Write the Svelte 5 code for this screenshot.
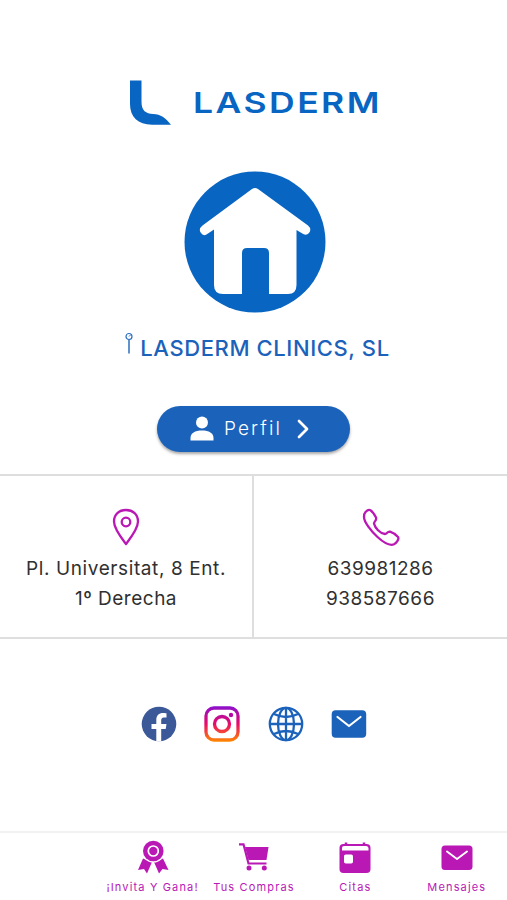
<script>
  const phones = ['639981286', '938587666'];

  const tabs = [
    { id: 'invite', label: '¡Invita Y Gana!' },
    { id: 'shop', label: 'Tus Compras' },
    { id: 'dates', label: 'Citas' },
    { id: 'messages', label: 'Mensajes' }
  ];
</script>

<div class="screen">
  <header class="brand">
    <svg class="mark" viewBox="0 0 42 46" width="42" height="46">
      <path d="M0 0.500H11.500V22C11.500 31 16 33.500 23 34C31 34.500 35 37.500 41 44.700H22C8 44.700 0 37 0 24Z" fill="#0865c2" />
    </svg>
    <span class="wordmark">LASDERM</span>
  </header>

  <svg class="house" viewBox="0 0 142 142" width="142" height="142">
    <circle cx="71" cy="71" r="70.500" fill="#0865c2" />
    <path
      d="M68 18Q71 16 74 18L124 54.500Q128 58 125 62Q122 65.500 117.500 62L112.500 59V114Q112.500 123 104 123H85V82Q85 77 80 77H63Q58 77 58 82V123H39Q30 123 30 114V58.500L24 62.500Q19.500 66 17 62Q14 58 18.500 54.500Z"
      fill="#fff"
    />
  </svg>

  <h1>
    <svg viewBox="0 0 10 24" width="10" height="24" fill="none" stroke="#2b6fbd">
      <circle cx="5" cy="4.500" r="3" stroke-width="1.200" />
      <path d="M5 4.500L7 2.500" stroke-width="1" />
      <path d="M5 8V21.500" stroke-width="1.500" />
    </svg>
    <span>LASDERM CLINICS, SL</span>
  </h1>

  <button class="profile">
    <svg viewBox="0 0 24 26" width="24" height="26" fill="#fff">
      <circle cx="12" cy="6.500" r="6" />
      <path d="M0.500 24.500V22C0.500 17 5 14.500 12 14.500S23.500 17 23.500 22V24.500Z" />
    </svg>
    <span>Perfil</span>
    <svg viewBox="0 0 12 20" width="12" height="20" fill="none" stroke="#fff" stroke-width="2.700" stroke-linecap="round" stroke-linejoin="round">
      <path d="M2 2L10 10L2 18" />
    </svg>
  </button>

  <section class="contact">
    <div class="cell">
      <svg viewBox="0 0 28 38" width="28" height="38" fill="none" stroke="#b918b5" stroke-width="2.300">
        <path d="M14 36C11 32 2 21 2 13.500C2 6.500 7 2 14 2S26 6.500 26 13.500C26 21 17 32 14 36Z" stroke-linejoin="round" />
        <circle cx="14" cy="14" r="4.300" />
      </svg>
      <p class="address">Pl. Universitat, 8 Ent.</p>
      <p>1º Derecha</p>
    </div>
    <div class="cell">
      <svg viewBox="0 0 38 38" width="38" height="38" fill="none" stroke="#b918b5" stroke-width="2.300" stroke-linejoin="round">
        <path d="M3.500 4C5 2.500 7 1.500 8.500 2.200C10.500 3.500 13 7.500 14 9.500C15 12.500 12 13.500 12 15.500C13 20 18 25.500 23 26C25 26 25 23.500 28 23.700C30.500 24.500 34 27 36 29C37.500 31 34.500 35 32 36.300C28 38 21 34 15.500 29C9 23 2 14 2 9C2 7 2.500 5 3.500 4Z" />
      </svg>
      {#each phones as phone}
        <p>{phone}</p>
      {/each}
    </div>
  </section>

  <nav class="social">
    <svg viewBox="0 0 36 36" width="36" height="36">
      <circle cx="18" cy="18" r="17.300" fill="#3b5998" />
      <path d="M15.300 35.300V23H10.500V18H15.300V14C15.300 9.500 18 7 22 7C24 7 25.500 7.300 25.500 7.300V11.500H23C20.700 11.500 20.200 13 20.200 14.500V18H25.500L24.700 23H20.200V35.300Z" fill="#fff" />
    </svg>
    <svg viewBox="0 0 36 36" width="36" height="36" fill="none">
      <defs>
        <linearGradient id="insta" x1="0" y1="0" x2="0" y2="36" gradientUnits="userSpaceOnUse">
          <stop offset="0" stop-color="#8a10d0" />
          <stop offset="0.500" stop-color="#e80b68" />
          <stop offset="1" stop-color="#ff8a00" />
        </linearGradient>
      </defs>
      <rect x="2" y="2" width="32" height="32" rx="8" stroke="url(#insta)" stroke-width="3.300" />
      <circle cx="18" cy="18" r="7.500" stroke="url(#insta)" stroke-width="3.300" />
      <circle cx="27" cy="9" r="2.200" fill="#b20aa5" />
    </svg>
    <svg viewBox="0 0 36 36" width="36" height="36" fill="none" stroke="#1b62bb" stroke-width="2.300">
      <circle cx="18" cy="18" r="16.200" />
      <ellipse cx="18" cy="18" rx="8" ry="16.200" />
      <path d="M18 2V34M2 18H34M6 8Q18 14 30 8M6 28Q18 22 30 28" />
    </svg>
    <svg viewBox="0 0 36 36" width="36" height="36">
      <rect x="0.700" y="4.200" width="34.500" height="27.500" rx="4" fill="#1b62bb" />
      <path d="M6.500 11L18 20L29.500 11" fill="none" stroke="#fff" stroke-width="2.200" stroke-linecap="round" stroke-linejoin="round" />
    </svg>
  </nav>

  <footer class="tabs">
    {#each tabs as tab (tab.id)}
      <a href="#{tab.id}" class="tab">
        <svg viewBox="0 0 34 34" width="34" height="34" fill="#b918b5">
          {#if tab.id === 'invite'}
            <path d="M7 18.500L2 30L8 29L11 33.500L16 22ZM27 18.500L32.500 30L26.500 29L23 33.500L18 22Z" />
            <circle cx="17.300" cy="11" r="11.500" fill="#fff" />
            <circle cx="17.300" cy="11" r="10.300" />
            <circle cx="17.300" cy="11" r="5" fill="none" stroke="#fff" stroke-width="1.700" />
          {:else if tab.id === 'shop'}
            <path d="M2 4.300H6.500L11.500 23.500H29.500" fill="none" stroke="#b918b5" stroke-width="2.200" />
            <path d="M8 7H31.500L29.500 20H11.500Z" />
            <circle cx="12" cy="28" r="2.500" />
            <circle cx="27.300" cy="28" r="2.500" />
          {:else if tab.id === 'dates'}
            <rect x="1.500" y="4" width="31" height="29" rx="4" />
            <path d="M8 4V2.500M26 4V2.500" stroke="#b918b5" stroke-width="2.500" />
            <path d="M4 8Q4 6 6 6H28Q30 6 30.500 8V10.500H4Z" fill="#fff" />
            <rect x="6" y="14.500" width="9" height="9" rx="1.800" fill="#fff" />
          {:else}
            <rect x="1.500" y="5.500" width="31" height="24.500" rx="3.500" />
            <path d="M7 11.500L17 19L27 11.500" fill="none" stroke="#fff" stroke-width="1.900" stroke-linecap="round" stroke-linejoin="round" />
          {/if}
        </svg>
        <span>{tab.label}</span>
      </a>
    {/each}
  </footer>
</div>

<style>
  :global(body) {
    margin: 0;
    background: #fff;
  }

  .screen {
    display: flex;
    flex-direction: column;
    align-items: center;
    box-sizing: border-box;
    height: 900px;
    padding-top: 80px;
    font-family: Inter, 'Open Sans', sans-serif;
    color: #303030;
    background: #fff;
    overflow: hidden;
  }

  .brand {
    display: flex;
    align-items: center;
    align-self: flex-start;
    height: 46px;
    margin-left: 130px;
  }

  .wordmark {
    margin-left: 20.500px;
    font-size: 29px;
    font-weight: 600;
    letter-spacing: 2px;
    line-height: 46px;
    color: #0865c2;
    transform: scaleX(1.225);
    transform-origin: left;
  }

  .house {
    flex: none;
    margin: 45px 0 0 2px;
  }

  h1 {
    display: flex;
    align-items: center;
    gap: 6px;
    height: 30px;
    margin: 19.500px 0 0 7px;
    font-size: 22px;
    font-weight: 500;
    letter-spacing: 0.6px;
    line-height: 30px;
    white-space: nowrap;
    color: #1b62bb;
  }

  h1 svg {
    margin-top: -8px;
  }

  .profile {
    display: flex;
    align-items: center;
    box-sizing: border-box;
    width: 193px;
    height: 46px;
    flex: none;
    margin-top: 43px;
    padding: 0 0 0 33px;
    border: none;
    border-radius: 23px;
    background: #1b62bb;
    box-shadow: 0 2px 3px rgba(0, 0, 0, 0.35);
    color: #fff;
    font-family: inherit;
    font-size: 19px;
    font-weight: 300;
    letter-spacing: 2.1px;
  }

  .profile span {
    width: 73px;
    margin-left: 10px;
    text-align: left;
  }

  .contact {
    display: grid;
    grid-template-columns: 254px 1fr;
    box-sizing: border-box;
    flex: none;
    width: 100%;
    height: 165px;
    margin-top: 22px;
    border-top: 2px solid #dedede;
    border-bottom: 2px solid #dedede;
  }

  .cell {
    display: flex;
    flex-direction: column;
    align-items: center;
    padding-top: 32.500px;
  }

  .cell:first-child {
    border-right: 2px solid #dedede;
  }

  .cell svg {
    margin-bottom: 7.500px;
  }

  .cell p {
    margin: 0;
    font-size: 19px;
    letter-spacing: 0.5px;
    line-height: 30px;
    white-space: nowrap;
  }

  .cell .address {
    letter-spacing: 0.6px;
  }

  .social {
    display: flex;
    gap: 27.300px;
    margin: 67px 0 0 1px;
  }

  .tabs {
    display: grid;
    grid-template-columns: repeat(4, 1fr);
    box-sizing: border-box;
    width: 100%;
    height: 69px;
    margin-top: auto;
    padding-left: 101.400px;
    border-top: 2px solid #f2f2f2;
  }

  .tab {
    display: flex;
    flex-direction: column;
    align-items: center;
    padding-top: 7px;
    color: #b918b5;
    text-decoration: none;
  }

  .tab svg {
    margin-left: 1px;
  }

  .tab span {
    margin: 5px 0 0 1px;
    font-size: 11px;
    line-height: 16px;
    letter-spacing: 1.15px;
    white-space: nowrap;
  }
</style>
